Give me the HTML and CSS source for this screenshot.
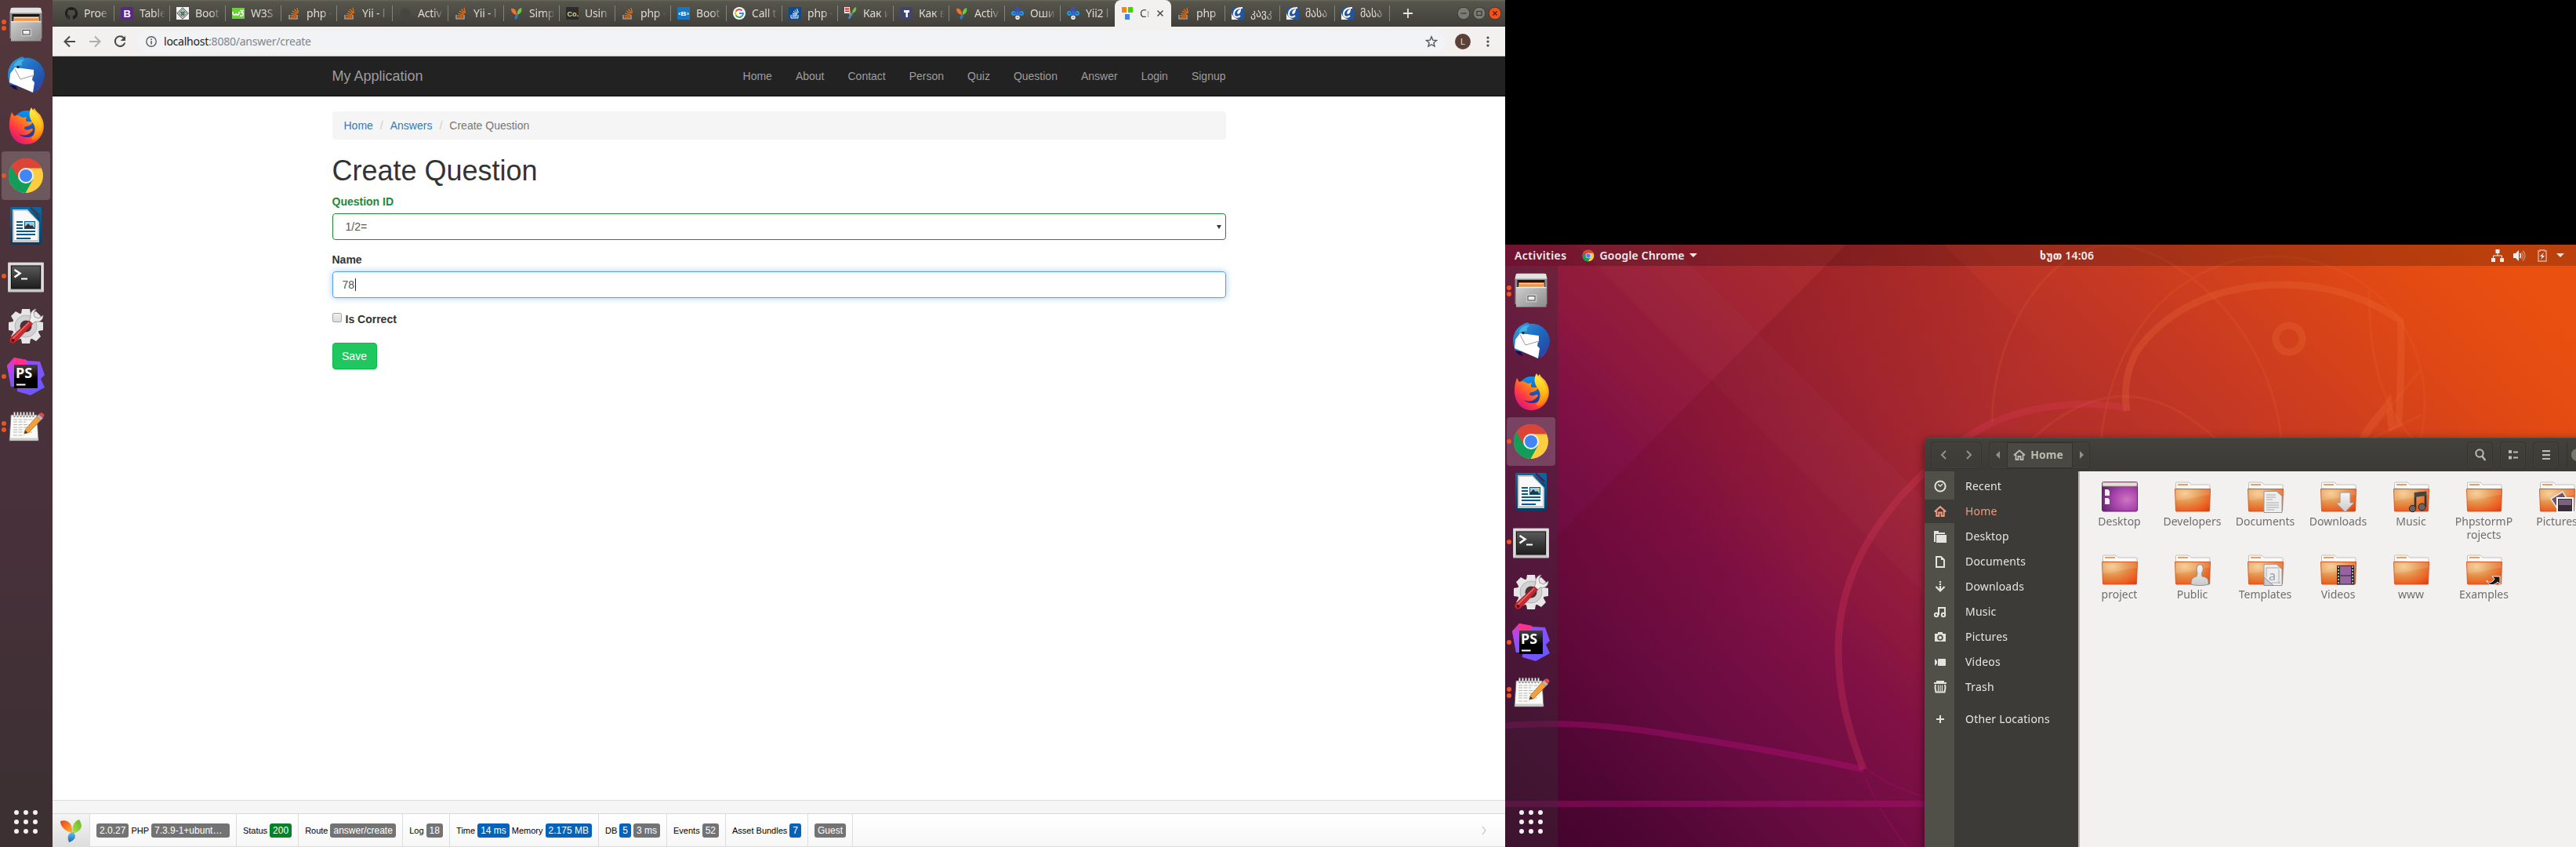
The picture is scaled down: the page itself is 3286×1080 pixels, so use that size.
FILE: index.html
```html
<!DOCTYPE html>
<html lang="en">
<head>
<meta charset="utf-8">
<title>Create Question</title>
<link rel="stylesheet" href="styles.css">
</head>
<body>
<svg class="defs" width="0" height="0" aria-hidden="true">
  <defs>
    <linearGradient id="gCab" x1="0" y1="0" x2="1" y2="1"><stop offset="0" stop-color="#cfcfcf"/><stop offset="1" stop-color="#8b8b8b"/></linearGradient>
    <linearGradient id="gLight" x1="0" y1="0" x2="0" y2="1"><stop offset="0" stop-color="#f6f6f6"/><stop offset="1" stop-color="#c9c9c9"/></linearGradient>
    <linearGradient id="gBird" x1="0" y1="0" x2="1" y2="1"><stop offset="0" stop-color="#3aa3dc"/><stop offset=".45" stop-color="#1f6fc4"/><stop offset="1" stop-color="#253a94"/></linearGradient>
    <linearGradient id="gFox" x1=".9" y1="0" x2=".1" y2="1"><stop offset="0" stop-color="#ffd43a"/><stop offset=".4" stop-color="#ff8a16"/><stop offset=".7" stop-color="#ff3647"/><stop offset="1" stop-color="#c90c8c"/></linearGradient>
    <linearGradient id="gFoxY" x1="0" y1="0" x2="0" y2="1"><stop offset="0" stop-color="#fff14a"/><stop offset=".5" stop-color="#ffc51b"/><stop offset="1" stop-color="#ff7a10"/></linearGradient>
    <linearGradient id="gGlobe" x1="0" y1="0" x2="0" y2="1"><stop offset="0" stop-color="#0a95f5"/><stop offset="1" stop-color="#2a2a8c"/></linearGradient>
    <linearGradient id="gDoc" x1="0" y1="0" x2="0" y2="1"><stop offset="0" stop-color="#0a69a8"/><stop offset="1" stop-color="#034066"/></linearGradient>
    <linearGradient id="gTerm" x1="0" y1="0" x2="0" y2="1"><stop offset="0" stop-color="#5a5a5a"/><stop offset=".5" stop-color="#3a3a3a"/><stop offset="1" stop-color="#1f1f1f"/></linearGradient>
    <linearGradient id="gPs1" x1="0" y1="0" x2=".3" y2="1"><stop offset="0" stop-color="#ff318c"/><stop offset=".4" stop-color="#b345f1"/><stop offset="1" stop-color="#765af8"/></linearGradient>
    <linearGradient id="gPs2" x1="0" y1="0" x2="1" y2="1"><stop offset="0" stop-color="#b345f1"/><stop offset="1" stop-color="#5c5cff"/></linearGradient>
    <linearGradient id="gPsBox" x1="0" y1="0" x2="0" y2="1"><stop offset="0" stop-color="#444"/><stop offset=".6" stop-color="#000"/></linearGradient>
    <radialGradient id="gFolder" cx=".28" cy=".2" r="1"><stop offset="0" stop-color="#f5ca8c"/><stop offset=".45" stop-color="#e48e45"/><stop offset=".85" stop-color="#ee551c"/><stop offset="1" stop-color="#d8431a"/></radialGradient>
    <radialGradient id="gDesk" cx=".7" cy=".6" r=".8"><stop offset="0" stop-color="#cf74c0"/><stop offset=".5" stop-color="#a541ab"/><stop offset="1" stop-color="#5b2468"/></radialGradient>
    <linearGradient id="gYr" x1="0" y1="0" x2="1" y2="1"><stop offset="0" stop-color="#e8401c"/><stop offset="1" stop-color="#ffb52e"/></linearGradient>
    <linearGradient id="gYg" x1="1" y1="0" x2="0" y2="1"><stop offset="0" stop-color="#5fb52d"/><stop offset="1" stop-color="#b4e04a"/></linearGradient>
    <linearGradient id="gYb" x1="0" y1="0" x2="0" y2="1"><stop offset="0" stop-color="#5fc3f0"/><stop offset="1" stop-color="#1765b5"/></linearGradient>

    <symbol id="files" viewBox="0 0 48 48">
      <path d="M5 3l2-1.500h34l2 1.500 1.500 5v33H3.500V8z" fill="#8e8e8e"/><path d="M5 2h38l1.500 6.500h-41z" fill="#e2e2e2"/>
      <path d="M6.500 10h35v10h-35z" fill="#1c1714"/><path d="M8 13h33v6H8z" fill="#e06a22"/><path d="M9 14h31v1.500H9z" fill="#ffe7c8"/><path d="M8 16.500h33V19H8z" fill="#f3a352"/>
      <path d="M5 19h38.500v25.500H5z" fill="url(#gCab)"/><path d="M5 19h38.500v1.200H5z" fill="#eee"/>
      <rect x="17.500" y="28" width="14" height="10.500" rx="1.500" fill="#c9c9c9" stroke="#aaa" stroke-width=".6"/><rect x="20" y="30.500" width="9" height="5.500" fill="#eee" stroke="#4a4a4a"/>
    </symbol>
    <symbol id="mail" viewBox="0 0 48 48">
      <path d="M15 2c3-2 6-2 7 0 12-2 25 7 26 21 0 11-7 22-20 24 2-1 3-2 3-4L4 36C-2 24 1 8 15 2z" fill="url(#gBird)"/>
      <path d="M4 22L10 14l24 4-2 12 3 3-2 13L3 33z" fill="#fff"/><path d="M10 14l24 3v8L17 29z" fill="#fff"/><path d="M10 16l7 13 17-5" fill="none" stroke="#9a9a9a"/>
      <path d="M8 14C10 6 16 3 22 4c-3 2-4 4-3 7-5 1-8 1-11 3z" fill="#46b1e6"/><path d="M4 36l10 2-3 1 3 4C9 42 6 40 4 36z" fill="#1c0e4c"/><circle cx="14" cy="13.500" r="1.800" fill="#1b2c46"/>
      <path d="M35 46l3-3-2-1 5-4-3-1 5-4-3-1 5-5c1 10-4 17-10 19z" fill="#3547a8"/>
    </symbol>
    <symbol id="fox" viewBox="0 0 48 48">
      <circle cx="25" cy="23" r="18" fill="url(#gGlobe)"/>
      <path d="M6 7l3 5 3-1c5 0 6 3 9 3l4-1c-1 3-2 4 0 6h8c-1 4-5 5-7 6-3 0-4 1-4 3 2 3 7 1 9 0 3 0 2 3 0 4-5 6-14 5-17 2 6 8 22 7 26-6 1-8-5-12-7-17-1-5 0-7 2-9 2 5 7 6 9 12 8 14-2 34-19 34C6 48-2 28 6 7z" fill="url(#gFox)"/>
      <path d="M31 1c2 5 7 6 10 13 6 11 3 19-2 25-4 4-8 4-8 1 4-5 7-12 2-19-6-8-5-15-2-20z" fill="url(#gFoxY)"/>
    </symbol>
    <symbol id="chrome" viewBox="0 0 48 48">
      <circle cx="24" cy="24" r="22" fill="#ffcd40"/>
      <path d="M24 24H44.500A22 22 0 0 1 23.500 46L33.500 28.500z" fill="#ffcd40"/>
      <path d="M24 24L33 29 23.500 46A22 22 0 0 1 5.500 12z" fill="#129d58"/>
      <path d="M5.500 12A22 22 0 0 1 44 14.500H24L14.500 28z" fill="#db4437"/>
      <circle cx="24" cy="24" r="10" fill="#f1f1f1"/><circle cx="24" cy="24" r="8" fill="#4285f4"/>
    </symbol>
    <symbol id="writer" viewBox="0 0 48 48">
      <path d="M6 0h24v8l14 4v32q0 4-3 4H7q-3 0-3-3V3q0-3 2-3z" fill="url(#gDoc)"/><path d="M31 0h11q2 0 2 2v10z" fill="#0a65a3"/>
      <path d="M7 3h19l15 16v26H7z" fill="#c9c9c9"/><path d="M9 5h16.500L39 18v24H9z" fill="#f9f9f9"/><path d="M24 3h3l15 15v-4L31 3z" fill="url(#gDoc)"/>
      <path d="M12 18h8v2h-8zm0 4h8v2h-8zm0 4h8v2h-8zm0 4h24v2H12zm0 4h24v2H12zm0 5h18v2H12z" fill="#035b8f"/><path d="M22 18h14v10H22z" fill="#035b8f"/><path d="M23 19h12v8H23z" fill="#8fd0f2"/><path d="M23 27v-2l4-4 3 3 2-1 3 4z" fill="#333"/><circle cx="33" cy="20.500" r="1.500" fill="#f4c542"/>
    </symbol>
    <symbol id="term" viewBox="0 0 48 48">
      <g transform="translate(0 1.500)"><rect x="1" y="5" width="46" height="38" rx="1" fill="#c9c7c6"/><rect x="2" y="6" width="44" height="35" fill="#e6e5e4"/><rect x="3.500" y="8" width="41" height="33" fill="#bdbbba"/>
      <rect x="5" y="9" width="38" height="30" fill="#111"/><rect x="6" y="10" width="36" height="28" fill="url(#gTerm)"/>
      <path d="M9.500 14.500l7 4.500-7 5" fill="none" stroke="#fff" stroke-width="2.500"/><path d="M18 25h8v2h-8z" fill="#fff"/></g>
    </symbol>
    <symbol id="tools" viewBox="0 0 48 48">
      <g fill="#e6e6e6"><circle cx="24" cy="24" r="17.500"/><path d="M19 2h10l1 6H18zM18 40h12l-1 6H19zM2 19l6-1v12l-6-1zM46 19l-6-1v12l6-1z"/><path d="M5 11l6-6 7 4-9 9zM37 5l6 6-4 7-9-9zM43 37l-6 6-7-4 9-9zM11 43l-6-6 4-7 9 9z"/></g>
      <circle cx="24" cy="24" r="14" fill="#d2d2d2" stroke="#aaa" stroke-width=".8"/><circle cx="24" cy="24" r="7.500" fill="#4a343a"/>
      <path d="M37 2c-5 1-8 5-7 11l-2 4 4 4 4-3c6 1 10-2 10-8l-6 4-5-2-1-5z" fill="#efefef" stroke="#8b8b8b" stroke-width=".8"/>
      <path d="M28.500 17l4 4L11 44c-4 4-10 0-7-5z" fill="#c9292f" stroke="#8f1a20" stroke-width=".8"/><path d="M28 19L7 40" stroke="#ec7372" stroke-width="1.500"/><circle cx="7.500" cy="42" r="1.900" fill="#4b1114"/>
    </symbol>
    <symbol id="ps" viewBox="0 0 48 48">
      <path d="M0 10L9 0l17 4 16 1 6 17-5 5 5 11-18 10-17-5V37H5z" fill="url(#gPs2)"/><path d="M0 10L9 0l16 3v7L10 25l-1 12H5z" fill="url(#gPs1)"/><path d="M9 0l16 3v6H9z" fill="#ff318c"/>
      <rect x="9" y="9" width="30" height="30" fill="url(#gPsBox)"/><path d="M12 33.500h11.500v2H12z" fill="#fff"/>
      <text x="11" y="25.500" font-family="Noto Sans, sans-serif" font-weight="700" font-size="18" fill="#fff">PS</text>
    </symbol>
    <symbol id="notes" viewBox="0 0 48 48">
      <path d="M5 9h33l2 32v1H3v-1z" fill="#fafaf8" stroke="#666" stroke-width=".8"/><path d="M4 38.500h35.500V41H4z" fill="#cfcfc9"/>
      <path d="M8 15h27M8 18h16M8 21.500h24M8 25h18M8 28h13M8 31h24M8 35h14" stroke="#b5b5b5" stroke-width="1" stroke-dasharray="5 1.500"/>
      <path d="M9.500 6v5M13.500 6v5M17.500 6v5M21.500 6v5M25.500 6v5M29.500 6v5M33.500 6v5" stroke="#888" stroke-width="2.400" stroke-linecap="round"/><path d="M9.500 6v4.500M13.500 6v4.500M17.500 6v4.500M21.500 6v4.500M25.500 6v4.500M29.500 6v4.500M33.500 6v4.500" stroke="#f4f4f4" stroke-width="1.300"/>
      <path d="M38 11l5 5-16 16-5 1 1-5z" fill="#f3a03b" stroke="#a85d18" stroke-width=".7"/><path d="M38 11l3-3 5 5-3 3z" fill="#b9b9b9"/><path d="M42 7c2-2 7 1 5 4l-2 2-5-5z" fill="#dc4a50"/><path d="M22 33l1.500-4 2.500 2.500z" fill="#3a2a14"/>
    </symbol>
    <symbol id="grid" viewBox="0 0 48 48"><g fill="#f4f2f1"><circle cx="12" cy="12" r="3"/><circle cx="24" cy="12" r="3"/><circle cx="36" cy="12" r="3"/><circle cx="12" cy="24" r="3"/><circle cx="24" cy="24" r="3"/><circle cx="36" cy="24" r="3"/><circle cx="12" cy="36" r="3"/><circle cx="24" cy="36" r="3"/><circle cx="36" cy="36" r="3"/></g></symbol>

    <symbol id="so" viewBox="0 0 16 16"><path d="M2 10v5h10v-5" fill="none" stroke="#bcbbbb" stroke-width="1.200"/><path d="M3.500 13.200h7M3.600 10.700l7 .6M4.300 8l6.800 1.800M6 5l5.800 3.600M8.500 2.600l4.300 5.200M12 .8l1.500 6.500" stroke="#f2700d" stroke-width="1.200"/></symbol>
    <symbol id="soblue" viewBox="0 0 16 16"><path d="M0 0h16v16H0z" fill="#0a4a97"/><path d="M3 10v4h9v-4M4.500 12h6M4.500 10l6 .4M5 8l5.800 1.300M6 5.500l5 3M8 3.500l3.800 4.300M10.500 2l2 5" fill="none" stroke="#fff"/></symbol>
    <symbol id="yii" viewBox="0 0 16 16"><path d="M1 2c4-1 7 2 7 8-5-1-7-4-7-8z" fill="#f4712a"/><path d="M14 1c1 4 0 7-5 9-1-4 1-8 5-9z" fill="#6fc83f"/><path d="M9 9c2 3 0 6-3 7-1-4 0-6 3-7z" fill="#1f7fd0"/></symbol>
    <symbol id="gh" viewBox="0 0 16 16"><path fill="#1d1d1b" d="M8 0C3.580 0 0 3.580 0 8c0 3.540 2.290 6.530 5.470 7.590.4.070.55-.17.550-.38 0-.19-.01-.82-.01-1.490-2.010.37-2.530-.49-2.690-.94-.09-.23-.48-.94-.82-1.130-.28-.15-.68-.52-.01-.53.63-.01 1.080.58 1.230.82.720 1.210 1.870.87 2.330.66.070-.52.280-.87.510-1.070-1.780-.2-3.640-.89-3.640-3.950 0-.87.310-1.590.82-2.150-.08-.2-.36-1.020.08-2.120 0 0 .67-.21 2.200.82.640-.18 1.320-.27 2-.27s1.360.09 2 .27c1.530-1.040 2.200-.82 2.200-.82.440 1.100.16 1.920.08 2.120.51.560.82 1.270.82 2.150 0 3.070-1.870 3.750-3.650 3.950.29.250.54.730.54 1.480 0 1.070-.01 1.930-.01 2.200 0 .21.150.46.550.38A8.010 8.010 0 0 0 16 8c0-4.420-3.580-8-8-8z"/></symbol>
    <symbol id="nodes" viewBox="0 0 16 16"><g fill="none" stroke-width="2"><circle cx="8" cy="3" r="2" stroke="#3b4cc8"/><circle cx="3" cy="8" r="2" stroke="#1b9bf0"/><circle cx="13" cy="8" r="2" stroke="#1b9bf0"/><circle cx="8" cy="13.200" r="1.800" stroke="#e8e8e8"/><path d="M4 6.500L8 10l4-3.500M8 5v3" stroke="#2b6fdc"/></g></symbol>
    <symbol id="cblue" viewBox="0 0 16 16"><path d="M0 0h16v16H0z" fill="#24559c"/><path d="M14 1C7 1 3 4 3 9c0 4 5 5 8 2" fill="none" stroke="#fff" stroke-width="2"/><path d="M12 2C8 4 6 7 8 9c3 0 4-4 4-7z" fill="#fff"/><path d="M0 16V7c1 5 4 7 9 9z" fill="#fff"/></symbol>

    <symbol id="folder" viewBox="0 0 46 40">
      <path d="M1.500 9V2q0-1 1-1H18l3 3h23q1 0 1 1v5z" fill="#fbfbfa" stroke="#b9b9b9" stroke-width=".9"/><path d="M4 3h13v2H4z" fill="#ef9b62"/>
      <path d="M.5 9.500h45L44.500 37q0 1-1 1h-41q-1 0-1-1z" fill="url(#gFolder)" stroke="#c9531f" stroke-width=".9"/><path d="M1 10h44v7C30 18 15 24 1 24z" fill="#fff" opacity=".13"/>
    </symbol>
  </defs>
</svg>

<div class="screens">
  <section class="left">
    <nav class="dock dock-solid">
      <div class="slot"><span class="dots"><i></i><i></i></span><svg><use href="#files"/></svg></div>
      <div class="slot"><svg><use href="#mail"/></svg></div>
      <div class="slot"><svg><use href="#fox"/></svg></div>
      <div class="slot active"><span class="dots"><i></i></span><svg><use href="#chrome"/></svg></div>
      <div class="slot"><svg><use href="#writer"/></svg></div>
      <div class="slot"><span class="dots"><i></i></span><svg><use href="#term"/></svg></div>
      <div class="slot"><svg><use href="#tools"/></svg></div>
      <div class="slot"><span class="dots"><i></i></span><svg><use href="#ps"/></svg></div>
      <div class="slot"><span class="dots"><i></i><i></i></span><svg><use href="#notes"/></svg></div>
      <div class="slot last"><svg><use href="#grid"/></svg></div>
    </nav>

    <main class="browser">
      <header class="tabs">
        <div class="tab"><svg><use href="#gh"/></svg><span>Proe</span></div>
        <div class="tab"><svg viewBox="0 0 16 16"><rect width="16" height="16" rx="2.500" fill="#5b2589"/><text x="3.500" y="13" font-family="Liberation Sans" font-weight="700" font-size="13" fill="#fff">B</text></svg><span>Table</span></div>
        <div class="tab"><svg viewBox="0 0 16 16"><path d="M0 0h16v16H0z" fill="#f5f5f5"/><path d="M8 .8L15.200 8 8 15.200.8 8z" fill="none" stroke="#333"/><path d="M8 3l5 5-5 5-5-5z" fill="none" stroke="#333" stroke-width=".8"/><circle cx="8" cy="8" r="2.800" fill="#4f9d7c"/><path d="M5.500 7h2M8.500 7h2M6 10h4" stroke="#222" stroke-width=".8"/></svg><span>Boot</span></div>
        <div class="tab"><svg viewBox="0 0 16 16"><path d="M0 1h16v14H0z" fill="#6ad13a"/><path d="M1 6v2q0 2 2 2t2-2q0 2 2 2t2-3V6" fill="none" stroke="#fff" stroke-width="1.500"/><path d="M10 4.500h4L12 7q3 0 2 3-1 2-4 1" fill="none" stroke="#fff" stroke-width="1.500"/></svg><span>W3S</span></div>
        <div class="tab"><svg><use href="#so"/></svg><span>php -</span></div>
        <div class="tab"><svg><use href="#so"/></svg><span>Yii - l</span></div>
        <div class="tab"><svg viewBox="0 0 16 16"><path d="M8 1l6 3.500v7L8 15l-6-3.500v-7z" fill="#454541"/></svg><span>Activ</span></div>
        <div class="tab"><svg><use href="#so"/></svg><span>Yii - l</span></div>
        <div class="tab"><svg><use href="#yii"/></svg><span>Simp</span></div>
        <div class="tab"><svg viewBox="0 0 16 16"><path d="M0 0h16v16H0z" fill="#2c2c2c"/><text x="1.500" y="11.500" font-family="Liberation Sans" font-weight="700" font-size="9" fill="#dcd08a">Co.</text></svg><span>Usin</span></div>
        <div class="tab"><svg><use href="#so"/></svg><span>php -</span></div>
        <div class="tab"><svg viewBox="0 0 16 16"><path d="M0 0h16v16H0z" fill="#1976c1"/><text x="1" y="11" font-family="Liberation Sans" font-weight="700" font-size="7" textLength="14" lengthAdjust="spacingAndGlyphs" fill="#fff">‹B›</text></svg><span>Boot</span></div>
        <div class="tab"><svg viewBox="0 0 16 16"><circle cx="8" cy="8" r="8" fill="#fff"/><g fill="none" stroke-width="2"><path d="M11.500 4.500A5 5 0 0 0 3.700 5.500" stroke="#ea4335"/><path d="M3.700 5.500a5 5 0 0 0 0 5" stroke="#fbbc05"/><path d="M3.700 10.500a5 5 0 0 0 7.600 1.200" stroke="#34a853"/><path d="M11.300 11.700A5 5 0 0 0 13 8H8" stroke="#4285f4"/></g></svg><span>Call t</span></div>
        <div class="tab"><svg><use href="#soblue"/></svg><span>php -</span></div>
        <div class="tab"><svg viewBox="0 0 16 16"><path d="M0 0h7v8H0z" fill="#fff"/><path d="M1 1.500h5M1 3.500h5M1 5.500h5" stroke="#d11"/><path d="M15 0c1 4-1 7-5 8 0-4 2-7 5-8z" fill="#6fc244"/><path d="M8 6l3 3-4 6H5z" fill="#3d8fd6"/><path d="M7 3v7" stroke="#e8c33a"/></svg><span>Как и</span></div>
        <div class="tab"><svg viewBox="0 0 16 16"><path d="M0 0h16v16H0z" fill="#42456a"/><path d="M5 4h7v3H10v6H7.500V7H5z" fill="#fff"/></svg><span>Как в</span></div>
        <div class="tab"><svg><use href="#yii"/></svg><span>Activ</span></div>
        <div class="tab"><svg><use href="#nodes"/></svg><span>Оши</span></div>
        <div class="tab nosep"><svg><use href="#nodes"/></svg><span>Yii2 l</span></div>
        <div class="tab current"><svg viewBox="0 0 16 16"><path d="M1 0h6v7H1z" fill="#ff8500"/><path d="M9 0h6v7H9z" fill="#3fd400"/><path d="M5 9h6v7H5z" fill="#4183f0"/></svg><span>Cr</span><svg class="close" viewBox="0 0 10 10"><path d="M1.500 1.500l7 7M8.500 1.500l-7 7" stroke="#4b4b4b" stroke-width="1.500"/></svg></div>
        <div class="tab"><svg><use href="#so"/></svg><span>php</span></div>
        <div class="tab"><svg><use href="#cblue"/></svg><span>კავკ</span></div>
        <div class="tab"><svg><use href="#cblue"/></svg><span>მასა</span></div>
        <div class="tab"><svg><use href="#cblue"/></svg><span>მასა</span></div>
        <svg class="plus" viewBox="0 0 12 12"><path d="M6 0v12M0 6h12" stroke="#e6e4dd" stroke-width="1.800"/></svg>
        <div class="winbtns">
          <svg viewBox="0 0 16 16"><circle cx="8" cy="8" r="7.800" fill="#7b7a73" stroke="#32312c" stroke-width=".8"/><path d="M4.500 8h7" stroke="#34332e" stroke-width="1.200"/></svg>
          <svg viewBox="0 0 16 16"><circle cx="8" cy="8" r="7.800" fill="#7b7a73" stroke="#32312c" stroke-width=".8"/><path d="M5 5.500h6v5H5z" fill="none" stroke="#34332e" stroke-width="1.200"/></svg>
          <svg viewBox="0 0 16 16"><circle cx="8" cy="8" r="7.800" fill="#f2511b" stroke="#32312c" stroke-width=".8"/><path d="M5.500 5.500l5 5M10.500 5.500l-5 5" stroke="#4c1a08" stroke-width="1.200"/></svg>
        </div>
      </header>

      <div class="toolbar">
        <svg class="nav" viewBox="0 0 16 16"><path d="M15 8H2M8 1.500L1.500 8 8 14.500" fill="none" stroke="#494949" stroke-width="2"/></svg>
        <svg class="nav" viewBox="0 0 16 16"><path d="M1 8h13M8 1.500L14.500 8 8 14.500" fill="none" stroke="#b0afae" stroke-width="2"/></svg>
        <svg class="nav" viewBox="0 0 16 16"><path d="M13 3.300A6.400 6.400 0 1 0 14.300 9.500" fill="none" stroke="#494949" stroke-width="2"/><path d="M15 .7V7H8.700z" fill="#494949"/></svg>
        <div class="omnibox">
          <svg class="info" viewBox="0 0 14 14"><circle cx="7" cy="7" r="6.200" fill="none" stroke="#5b5e62" stroke-width="1.400"/><path d="M6.200 6h1.600v4.500H6.200zM6.200 3.300h1.600v1.600H6.200z" fill="#5b5e62"/></svg>
          <p class="url"><b>localhost</b>:8080/answer/create</p>
          <svg class="star" viewBox="0 0 16 16"><path d="M8 1.800l1.800 4.300 4.700.4-3.600 3 1.100 4.600L8 11.700l-4 2.400 1.100-4.600-3.600-3 4.700-.4z" fill="none" stroke="#56585c" stroke-width="1.400"/></svg>
        </div>
        <span class="avatar">L</span>
        <svg class="menu" viewBox="0 0 4 14"><circle cx="2" cy="2" r="1.600"/><circle cx="2" cy="7" r="1.600"/><circle cx="2" cy="12" r="1.600"/></svg>
      </div>

      <div class="navbar">
        <div class="container navrow">
          <a class="brand">My Application</a>
          <ul class="links"><li>Home</li><li>About</li><li>Contact</li><li>Person</li><li>Quiz</li><li>Question</li><li>Answer</li><li>Login</li><li>Signup</li></ul>
        </div>
      </div>

      <div class="page">
        <div class="container">
          <div class="breadcrumb"><a>Home</a><i>/</i><a>Answers</a><i>/</i><span>Create Question</span></div>
          <h1>Create Question</h1>
          <div class="group ok"><label>Question ID</label><div class="control select"><span>1/2=</span><svg viewBox="0 0 6 5"><path d="M0 0h6L3 5z" fill="#333"/></svg></div></div>
          <div class="group"><label>Name</label><div class="control focus"><span>78</span><i class="caret"></i></div></div>
          <div class="check"><span class="box"></span><label>Is Correct</label></div>
          <button class="save">Save</button>
        </div>
      </div>
      <div class="footer"></div>
      <div class="debug">
        <div class="cell logo"><svg viewBox="0 0 30 30"><path d="M1 3c10-3 16 4 15 15C8 16 1 11 1 3z" fill="url(#gYr)"/><path d="M25 1c5 8 4 14-8 18-2-8 1-16 8-18z" fill="url(#gYg)"/><path d="M17 17c6 5 2 11-5 13-3-7-1-12 5-13z" fill="url(#gYb)"/></svg></div>
        <div class="cell w1"><b>2.0.27</b>PHP<b class="php">7.3.9-1+ubunt…</b></div>
        <div class="cell w2">Status<b class="green">200</b></div>
        <div class="cell w3">Route<b>answer/create</b></div>
        <div class="cell w4">Log<b>18</b></div>
        <div class="cell w5">Time<b class="blue">14 ms</b>Memory<b class="blue">2.175 MB</b></div>
        <div class="cell w6">DB<b class="blue">5</b><b>3 ms</b></div>
        <div class="cell w7">Events<b>52</b></div>
        <div class="cell w8">Asset Bundles<b class="blue">7</b></div>
        <div class="cell w9"><b>Guest</b></div>
        <svg class="chev" viewBox="0 0 6 12"><path d="M1 1l4 5-4 5" fill="none" stroke="#ccc" stroke-width="1.300"/></svg>
      </div>
    </main>
  </section>

  <section class="right">
    <div class="desktop">
      <svg class="wall" viewBox="0 0 1366 768" preserveAspectRatio="none">
        <defs>
          <linearGradient id="bg" gradientUnits="userSpaceOnUse" x1="0" y1="768" x2="1001" y2="-253">
            <stop offset="0" stop-color="#3f0329"/><stop offset=".1" stop-color="#4f0634"/><stop offset=".2" stop-color="#660b41"/><stop offset=".32" stop-color="#7f1045"/><stop offset=".38" stop-color="#8d183f"/><stop offset=".525" stop-color="#a62830"/><stop offset=".63" stop-color="#b5302a"/><stop offset=".77" stop-color="#cb3c20"/><stop offset=".9" stop-color="#e04914"/><stop offset="1" stop-color="#ea500f"/>
          </linearGradient>
          <linearGradient id="shade" gradientUnits="userSpaceOnUse" x1="250" y1="190" x2="450" y2="390"><stop offset="0" stop-color="#600010" stop-opacity=".16"/><stop offset="1" stop-color="#600010" stop-opacity="0"/></linearGradient>
        </defs>
        <path fill="url(#bg)" d="M0 0h1366v768H0z"/>
        <path d="M435 0L60 378v390h700V200L560 0z" fill="url(#shade)"/>
        <path d="M90 0h120l390 390v120z" fill="#fff" opacity=".02"/>
        <g fill="none" stroke="#f0703a" stroke-width="3" opacity=".14">
          <path d="M621 227C623 100 700 0 775 0s200 100 215 247"/><path d="M650 270C760 150 850 190 920 260M760 250C775 100 870 15 979 15c110 0 194 80 194 187 0 30-5 50-14 72"/><path d="M1102 57c0 100 20 150 55 190M1167 160L1080 270M1170 217l-120 55"/>
        </g>
        <g fill="none" stroke="#f0703a" stroke-width="9" opacity=".25">
          <path d="M793 212C788 175 796 155 806 135 850 75 920 51 992 51c75 0 125 28 150 46 3 50-1 90-2 131l-9 4-4-30c-10 15-30 30-45 70"/><circle cx="1000" cy="120" r="17"/>
        </g>
        <g fill="none" stroke="#e03a58" stroke-width="9" opacity=".28">
          <path d="M793 208C720 195 640 210 590 245 500 310 425 400 425 515c0 60 15 110 32 154"/>
        </g>
        <g fill="none" stroke="#c01080" stroke-width="8" opacity=".35">
          <path d="M0 613C70 609 110 611 180 620c100 15 190 30 277 49M0 713h560"/><path d="M460 667c30 25 60 30 85 43M460 680c15 40 40 70 60 100" stroke-width="2" opacity=".6"/>
        </g>
      </svg>
      <header class="topbar">
        <span>Activities</span><svg class="mini"><use href="#chrome"/></svg><span class="app">Google Chrome</span><svg class="tri" viewBox="0 0 10 5"><path d="M0 0h10L5 5z" fill="#eee"/></svg>
        <span class="clock">ხუთ 14:06</span>
        <div class="tray">
          <svg width="16" height="16" viewBox="0 0 16 16"><path d="M5.500 0h5v5h-5zM0 11h5v5H0zM11 11h5v5h-5z" fill="#eee"/><path d="M8 5v3M2.500 11V8h11v3" fill="none" stroke="#eee"/></svg>
          <svg width="16" height="16" viewBox="0 0 16 16"><path d="M0 5h3l4-4v14l-4-4H0z" fill="#eee"/><path d="M8.500 5q2 3 0 6" stroke="#eee" stroke-width="1.600" fill="none"/><path d="M10.500 3.500q4 4.500 0 9M12.500 1.500q5 6.500 0 13" stroke="#eee" stroke-width="1.300" fill="none" opacity=".45"/></svg>
          <svg class="bat" width="12" height="16" viewBox="0 0 12 16"><path d="M1 2h2V1h6v1h2v13H1z" fill="none" stroke="#eee" stroke-width="1.800" opacity=".5"/><path d="M8 4L3 9h3l-2 4 5-5H6z" fill="#fff"/></svg>
          <svg width="10" height="5" viewBox="0 0 10 5"><path d="M0 0h10L5 5z" fill="#eee"/></svg>
        </div>
      </header>
      <nav class="dock dock-clear">
        <div class="slot"><span class="dots"><i></i><i></i></span><svg><use href="#files"/></svg></div>
        <div class="slot"><svg><use href="#mail"/></svg></div>
        <div class="slot"><svg><use href="#fox"/></svg></div>
        <div class="slot active"><span class="dots"><i></i></span><svg><use href="#chrome"/></svg></div>
        <div class="slot"><svg><use href="#writer"/></svg></div>
        <div class="slot"><span class="dots"><i></i></span><svg><use href="#term"/></svg></div>
        <div class="slot"><svg><use href="#tools"/></svg></div>
        <div class="slot"><span class="dots"><i></i></span><svg><use href="#ps"/></svg></div>
        <div class="slot"><span class="dots"><i></i><i></i></span><svg><use href="#notes"/></svg></div>
        <div class="slot last"><svg><use href="#grid"/></svg></div>
      </nav>

      <div class="files">
        <header class="fhead">
          <div class="fbtn pair"><svg viewBox="0 0 8 12"><path d="M7 1L2 6l5 5" fill="none" stroke="#92918a" stroke-width="2"/></svg><svg viewBox="0 0 8 12"><path d="M1 1l5 5-5 5" fill="none" stroke="#92918a" stroke-width="2"/></svg></div>
          <div class="fbtn path"><svg viewBox="0 0 5 10"><path d="M5 0v10L0 5z" fill="#92918a"/></svg>
            <div class="crumb"><svg viewBox="0 0 16 14"><path d="M1 7.500L8 1.500l7 6M3.500 6.500V13h3V9h3v4h3V6.500" fill="none" stroke="#bcbbb2" stroke-width="1.800"/></svg>Home</div>
            <svg viewBox="0 0 5 10"><path d="M0 0v10l5-5z" fill="#92918a"/></svg></div>
          <span class="grow"></span>
          <div class="fbtn sq"><svg width="14" height="16" viewBox="0 0 14 16"><circle cx="6" cy="6" r="4.700" fill="none" stroke="#bcbbb2" stroke-width="2"/><path d="M9 9.500l4.500 5.500" stroke="#bcbbb2" stroke-width="2.400"/></svg></div>
          <div class="fbtn sq"><svg width="12" height="12" viewBox="0 0 12 12"><path d="M0 0h4v4H0zM0 7.500h4v4H0zM6 1.500h6v2H6zM6 8.500h6v2H6z" fill="#bcbbb2"/></svg></div>
          <div class="fbtn sq"><svg width="10" height="12" viewBox="0 0 10 12"><path d="M0 0h10v2.200H0zM0 5h10v2.200H0zM0 10h10v2.200H0z" fill="#bcbbb2"/></svg></div>
          <i class="vsep"></i><span class="round"></span>
        </header>
        <div class="fbody">
          <aside class="side">
            <div class="item"><svg viewBox="0 0 16 16"><circle cx="8" cy="8" r="6.600" fill="none" stroke="#e4e3df" stroke-width="2"/><path d="M5 5.500l3 2.500 3-3" fill="none" stroke="#e4e3df" stroke-width="1.400"/></svg><span>Recent</span></div>
            <div class="item sel"><svg viewBox="0 0 16 16"><path d="M.8 8.500L8 2.200l7.200 6.300M3.300 7v7h3V9.500h3.400V14h3V7" fill="none" stroke="#f0997b" stroke-width="2"/></svg><span>Home</span></div>
            <div class="item"><svg viewBox="0 0 16 16"><path d="M0 1h6v2h8v2H2v10H0z" fill="#e4e3df"/><path d="M3 6h13v10H3z" fill="#e4e3df"/></svg><span>Desktop</span></div>
            <div class="item"><svg viewBox="0 0 16 16"><path d="M3 2h6l4 4v9H3z" fill="none" stroke="#e4e3df" stroke-width="2"/><path d="M9 2v4h4z" fill="#e4e3df"/></svg><span>Documents</span></div>
            <div class="item"><svg viewBox="0 0 16 16"><path d="M8 1v2M8 4v2M8 7v6M2.500 8L8 13.500 13.500 8" fill="none" stroke="#e4e3df" stroke-width="2.200"/></svg><span>Downloads</span></div>
            <div class="item"><svg viewBox="0 0 16 16"><circle cx="3" cy="12" r="2.200" fill="none" stroke="#e4e3df" stroke-width="2"/><circle cx="12" cy="12" r="2.200" fill="none" stroke="#e4e3df" stroke-width="2"/><path d="M6 12V3h8v9" fill="none" stroke="#e4e3df" stroke-width="2"/></svg><span>Music</span></div>
            <div class="item"><svg viewBox="0 0 16 16"><path d="M1 4h4V2h6v2h4v10H1z" fill="#e4e3df"/><circle cx="8" cy="9" r="2.900" fill="#e4e3df" stroke="#505048" stroke-width="1.800"/></svg><span>Pictures</span></div>
            <div class="item"><svg viewBox="0 0 16 16"><path d="M1 4l3 3v3l-3 3z" fill="#e4e3df"/><rect x="5" y="4" width="10" height="9" rx="1" fill="#e4e3df"/></svg><span>Videos</span></div>
            <div class="item"><svg viewBox="0 0 16 16"><path d="M0 2h3V0h10v2h3v2H0z" fill="#e4e3df"/><path d="M2 5l-.5 4 1 5.500h11l1-5.500-.5-4" fill="none" stroke="#e4e3df" stroke-width="2"/><path d="M5.500 5.500v8M8 5.500v8M10.500 5.500v8" stroke="#e4e3df" stroke-width="1.200"/></svg><span>Trash</span></div>
            <div class="item other"><svg viewBox="0 0 16 16"><path d="M8 3v10M3 8h10" stroke="#e4e3df" stroke-width="2"/></svg><span>Other Locations</span></div>
          </aside>
          <div class="icons">
            <figure><svg viewBox="0 0 46 40"><rect x=".5" y=".5" width="45" height="37.500" rx="2" fill="url(#gDesk)" stroke="#6b1f74"/><path d="M1 1h44v5H1z" fill="#e3e2d2" stroke="#9a9774" stroke-width=".8"/><path d="M4 10h4l2 2v6H4zM4 21h4l2 2v6H4z" fill="#f5eff5"/></svg><figcaption>Desktop</figcaption></figure>
            <figure><svg viewBox="0 0 46 40"><use href="#folder"/></svg><figcaption>Developers</figcaption></figure>
            <figure><svg viewBox="0 0 46 40"><use href="#folder"/><path d="M21 12.500h16l7 6v21H21z" fill="#eee" stroke="#999"/><path d="M24 17h12M24 20h12M24 23h8M24 27h16M24 30h16M24 33h16M24 36h10" stroke="#aaa"/></svg><figcaption>Documents</figcaption></figure>
            <figure><svg viewBox="0 0 46 40"><use href="#folder"/><path d="M25 14h13v13h5L31.500 39 20 27h5z" fill="url(#gLight)" stroke="#999"/></svg><figcaption>Downloads</figcaption></figure>
            <figure><svg viewBox="0 0 46 40"><use href="#folder"/><path d="M28 34V15.500l13-1.500v18" fill="none" stroke="#333" stroke-width="2.600"/><path d="M27 14l15-1v5l-15 2z" fill="#444"/><circle cx="24.500" cy="34.500" r="4.200" fill="#666" stroke="#222"/><circle cx="36.500" cy="32.500" r="4.500" fill="#666" stroke="#222"/></svg><figcaption>Music</figcaption></figure>
            <figure><svg viewBox="0 0 46 40"><use href="#folder"/></svg><figcaption>PhpstormP<br>rojects</figcaption></figure>
            <figure><svg viewBox="0 0 46 40"><use href="#folder"/><path d="M15 22l15-9 8 13-14 10z" fill="#6c5668" stroke="#e8e8e8" stroke-width="1.500"/><path d="M23 21h20v18H23z" fill="#3a2c3a" stroke="#fff" stroke-width="2"/><path d="M25 23h16v7H25z" fill="#7a627a"/></svg><figcaption>Pictures</figcaption></figure>
            <figure><svg viewBox="0 0 46 40"><use href="#folder"/></svg><figcaption>project</figcaption></figure>
            <figure><svg viewBox="0 0 46 40"><use href="#folder"/><path d="M21 38c0-8 3-9 7-10l1-4c-4-13 9-15 7-3l-1.500 3 .5 4c5 1 9 2 8 10-4 2-18 2-22 0z" fill="url(#gLight)" stroke="#909090"/></svg><figcaption>Public</figcaption></figure>
            <figure><svg viewBox="0 0 46 40"><use href="#folder"/><path d="M21 12.500h16l7 6v21H21z" fill="#eee" stroke="#999"/><path d="M21 29l12 10.500H21z" fill="#ccc" stroke="#889"/><path d="M24 17h18M24 17v12M40 19v18M30 36h12" stroke="#a9a9b5"/><text x="27" y="33" font-family="Noto Sans, sans-serif" font-size="16" fill="#9a9aac">a</text></svg><figcaption>Templates</figcaption></figure>
            <figure><svg viewBox="0 0 46 40"><use href="#folder"/><path d="M21 14h22v24.500H21z" fill="#2b2b2b"/><path d="M25 15h14v11.500H25zM25 27.500h14v10H25z" fill="#9662a0"/><path d="M23 15v23M41 15v23" stroke="#ddd" stroke-width="1.500" stroke-dasharray="2 2"/></svg><figcaption>Videos</figcaption></figure>
            <figure><svg viewBox="0 0 46 40"><use href="#folder"/></svg><figcaption>www</figcaption></figure>
            <figure><svg viewBox="0 0 46 40"><use href="#folder"/><path d="M26 33c3 4 8 3 10-2l-3-3h10v10l-3-3c-4 5-12 5-14-2z" fill="#1c1412" stroke="#fff"/></svg><figcaption>Examples</figcaption></figure>
          </div>
        </div>
      </div>
    </div>
  </section>
</div>
</body>
</html>
```
FILE: styles.css
```css
* { box-sizing: border-box; }
body { margin: 0; background: #000; font-family: "Liberation Sans", Arial, sans-serif; font-size: 14px; line-height: 20px; color: #333; overflow: hidden; }
svg { display: block; flex: none; }
.defs { position: absolute; }
p, h1, ul, figure { margin: 0; padding: 0; }
.screens { display: flex; width: 3286px; height: 1080px; overflow: hidden; }
.left { display: flex; width: 1920px; flex: none; }
.right { display: flex; flex-direction: column; justify-content: flex-end; width: 1366px; flex: none; }

/* launcher */
.dock { width: 67px; flex: none; display: flex; flex-direction: column; position: relative; }
.dock-solid { background: linear-gradient(#53373b, #4b333b 30%, #47303a 65%, #3c3033 96%); }
.dock-clear { background: rgba(58, 46, 56, .4); height: 741px; }
.slot { width: 64px; height: 60px; margin: 2px 0 2px 2px; padding-left: 7px; display: flex; align-items: center; position: relative; }
.slot svg { width: 48px; height: 48px; }
.slot.active { width: 62px; height: 62px; margin: 1px 0 1px 2px; background: rgba(255, 255, 255, .18); border-radius: 4px; }
.slot.last { margin-top: auto; margin-bottom: 2px; }
.dots { position: absolute; left: 0; top: 50%; transform: translateY(-50%); display: flex; flex-direction: column; gap: 2px; }
.dots i { width: 6px; height: 6px; border-radius: 50%; background: #e95420; }

/* browser chrome */
.browser { flex: 1; min-width: 0; display: flex; flex-direction: column; background: #fff; }
.tabs { height: 34px; flex: none; display: flex; align-items: center; padding-left: 8px; background: linear-gradient(#69685b, #57564d 2px, #3f3e39); font-family: "Noto Sans", "DejaVu Sans", sans-serif; color: #dfdbd2; }
.tab { width: 71px; height: 20px; flex: none; display: flex; align-items: center; padding-left: 8px; gap: 8px; border-right: 1px solid #85847a; }
.tab svg { width: 16px; height: 16px; }
.tab span { width: 38px; flex: none; white-space: nowrap; letter-spacing: -.2px; -webkit-mask-image: linear-gradient(90deg, #000 20px, transparent 33px); mask-image: linear-gradient(90deg, #000 20px, transparent 33px); }
.tab.nosep { border-color: transparent; width: 69px; }
.tab.current { height: 34px; width: 72px; border: 0; border-radius: 8px 8px 0 0; background: #f2f1f0; color: #444; }
.tab.current span { width: 13px; -webkit-mask-image: linear-gradient(90deg, #000 7px, transparent 13px); mask-image: linear-gradient(90deg, #000 7px, transparent 13px); }
.tab.current .close { width: 10px; height: 10px; }
.tab.current + .tab { width: 69px; }
.tab.current + .tab ~ .tab { width: 70px; }
.plus { width: 12px; height: 12px; margin-left: 17px; }
.winbtns { display: flex; gap: 4px; margin-left: auto; padding-right: 5px; }
.winbtns svg { width: 16px; height: 16px; }
.toolbar { height: 38px; flex: none; display: flex; align-items: center; padding: 0 20px 0 14px; background: #f2f1f0; border-bottom: 1px solid #bcc2c4; }
.nav { width: 16px; height: 16px; margin-right: 16px; }
.omnibox { flex: 1; height: 28px; border-radius: 14px; background: #f1f3f4; display: flex; align-items: center; padding: 0 9px 0 8px; margin-left: -2px; }
.info { width: 14px; height: 14px; margin: 0 9px 0 3px; }
.url { flex: 1; font-family: "Noto Sans", sans-serif; font-size: 14px; letter-spacing: -.23px; color: #80868b; }
.url b { font-weight: 400; color: #222; }
.star { width: 16px; height: 16px; }
.avatar { width: 20px; height: 20px; border-radius: 50%; margin: 0 20px 0 13px; background: #5d4037; color: #e5dcd8; font-size: 11px; text-align: center; }
.menu { width: 4px; height: 14px; fill: #4a4a4a; }

/* site */
.container { width: 1140px; margin: 0 auto; }
.navbar { height: 51px; flex: none; background: #222; border-bottom: 1px solid #080808; color: #9d9d9d; }
.navrow { display: flex; justify-content: space-between; align-items: center; height: 50px; }
.brand { font-size: 18px; }
.links { display: flex; list-style: none; gap: 30px; }
.page { flex: 1; padding-top: 19px; }
.breadcrumb { display: flex; height: 36px; padding: 8px 15px; background: #f5f5f5; border-radius: 4px; color: #777; }
.breadcrumb a { color: #337ab7; }
.breadcrumb i { color: #ccc; font-style: normal; padding: 0 9px; }
h1 { font-size: 36px; line-height: 40px; font-weight: 500; margin: 20px 0 9px; }
.group { margin-bottom: 15px; }
label { display: block; font-weight: 700; height: 20px; margin-bottom: 5px; }
.control { height: 34px; border: 1px solid #ccc; border-radius: 4px; padding: 0 12px; display: flex; align-items: center; color: #555; }
.select { padding: 0 5px 0 16px; justify-content: space-between; }
.select svg { width: 6px; height: 5px; }
.ok label { color: #218739; }
.ok .control { border-color: #218739; }
.focus { border-color: #57a0e8; box-shadow: 0 0 8px rgba(102, 175, 233, .6); }
.caret { width: 1px; height: 16px; background: #222; margin-left: 1px; }
.check { display: flex; gap: 5px; }
.check label { margin: 2px 0 20px; }
.box { width: 12px; height: 12px; margin-top: 4px; border: 1px solid #a5a5a5; border-radius: 2px; background: linear-gradient(#eee, #dcdcdc); }
.save { display: block; width: 57px; height: 34px; padding: 0; font: 14px "Liberation Sans", sans-serif; color: #fff; background: #20c75f; border: 1px solid #08b850; border-radius: 4px; }
.footer { height: 17px; flex: none; background: #f5f5f5; border-top: 1px solid #ddd; }
.debug { height: 43px; flex: none; display: flex; align-items: stretch; border-top: 1px solid #d9d9d9; border-bottom: 1px solid #ddd; background: linear-gradient(#fff, #f7f7f7); font-size: 11px; color: #000; }
.cell { display: flex; align-items: center; justify-content: center; gap: 3px; border-right: 1px solid #ddd; white-space: nowrap; flex: none; }
.cell b { font-weight: 400; font-size: 12px; line-height: 18px; height: 18px; color: #fff; background: #737373; border-radius: 3px; padding: 0 4px; }
.cell b.php { width: 100px; }
.cell b.green { background: #038326; }
.cell b.blue { background: #0362ba; }
.logo { width: 48px; background: linear-gradient(#f5f5f5, #ddd); }
.logo svg { width: 30px; height: 30px; }
.w1 { width: 187px; } .w2 { width: 79px; } .w3 { width: 133px; } .w4 { width: 60px; } .w5 { width: 190px; }
.w6 { width: 87px; } .w7 { width: 75px; } .w8 { width: 105px; } .w9 { width: 57px; }
.chev { width: 6px; height: 12px; margin: auto 24px auto auto; }

/* second monitor */
.desktop { position: relative; height: 768px; overflow: hidden; }
.wall { position: absolute; inset: 0; width: 1366px; height: 768px; }
.topbar { position: relative; height: 27px; display: flex; align-items: center; padding-left: 12px; background: rgba(0, 0, 0, .2); color: #eee; font: 600 14px/27px "Noto Sans", "DejaVu Sans", sans-serif; letter-spacing: .4px; }
.mini { width: 16px; height: 16px; margin: 0 6px 0 20px; }
.app { letter-spacing: .2px; }
.tri { width: 10px; height: 5px; margin-left: 6px; }
.clock { position: absolute; left: 682px; letter-spacing: .2px; }
.tray { display: flex; align-items: center; gap: 12px; margin: 0 15px 0 auto; }
.bat { margin-left: 3px; }
.files { position: absolute; left: 535px; top: 246px; width: 861px; height: 540px; border-radius: 6px 6px 0 0; overflow: hidden; box-shadow: 0 3px 12px rgba(0, 0, 0, .5); font-family: "Noto Sans", sans-serif; }
.fhead { height: 43px; display: flex; align-items: center; padding: 0 0 0 8px; background: linear-gradient(#42413c, #3b3a36); border-top: 1px solid #4f4e48; }
.fbtn { height: 35px; display: flex; align-items: center; justify-content: center; border: 1px solid #35342f; border-radius: 4px; box-shadow: inset 0 0 0 1px #42413c; }
.pair { width: 65px; gap: 25px; }
.pair svg { width: 8px; height: 12px; }
.path { width: 129px; margin-left: 9px; gap: 9px; }
.path > svg { width: 5px; height: 10px; }
.crumb { width: 84px; height: 33px; display: flex; align-items: center; justify-content: center; gap: 6px; padding-right: 3px; background: #494842; border: 1px solid #33322e; color: #bcbbb2; font-weight: 700; }
.crumb svg { width: 16px; height: 14px; }
.grow { flex: 1; }
.sq { width: 33px; margin-right: 9px; }
.sq:nth-of-type(5) { margin-right: 10px; }
.vsep { width: 1px; height: 32px; background: #33322e; }
.round { width: 16px; height: 16px; border-radius: 50%; background: #77766f; margin: 0 20px 0 5px; flex: none; }
.fbody { display: flex; height: 497px; }
.side { width: 198px; flex: none; padding-top: 4px; border-right: 2px solid #b8b5b2; color: #e6e5e1; background: linear-gradient(90deg, #505048 38px, #3c3b37 38px); letter-spacing: .2px; }
.item { height: 30px; margin-bottom: 2px; display: flex; align-items: center; padding-left: 12px; gap: 24px; }
.item svg { width: 16px; height: 16px; }
.sel { background: #3c3b37; color: #f0997b; }
.other { margin-top: 11px; }
.icons { flex: 1; background: #f2f1f0; display: grid; grid-template-columns: repeat(7, 93px); grid-auto-rows: 92.500px; padding: 13px 0 0 4px; color: #6f6e6c; }
figure { display: flex; flex-direction: column; align-items: center; }
figure svg { width: 46px; height: 40px; overflow: visible; }
figcaption { line-height: 17px; margin-top: 2px; text-align: center; }
```
